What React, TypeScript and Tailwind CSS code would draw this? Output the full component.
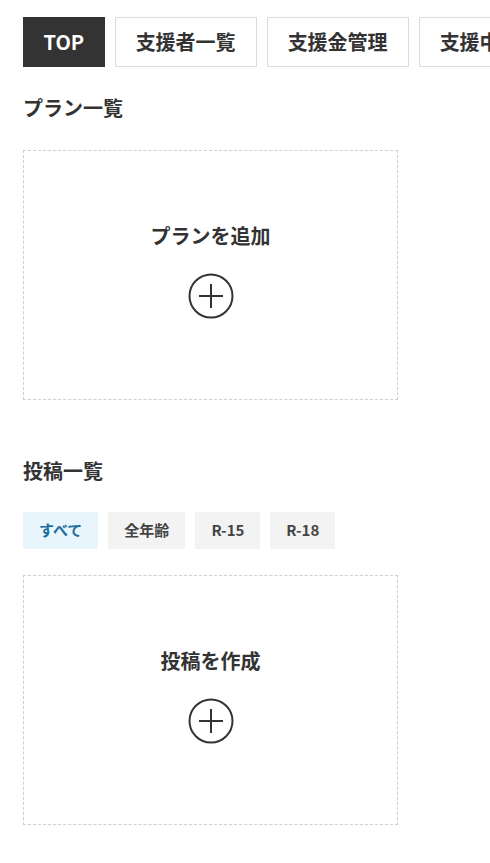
import React from "react";

const font = { fontFamily: '"Noto Sans CJK JP", "Noto Sans", sans-serif' };

function PlusCircle() {
  return (
    <svg width="46" height="46" viewBox="0 0 46 46" fill="none" stroke="#333" strokeWidth="2">
      <circle cx="23" cy="23" r="21.5" />
      <path d="M23 11v24M11 23h24" />
    </svg>
  );
}

function AddBox({ label }: { label: string }) {
  return (
    <div className="flex h-[250px] w-[375px] flex-col items-center justify-center gap-[22px] border border-dashed border-[#cfcfcf] pb-[11px]">
      <span className="text-[20px] font-bold leading-[30px] text-[#333]">{label}</span>
      <PlusCircle />
    </div>
  );
}

export default function App() {
  const tabs = ["支援者一覧", "支援金管理", "支援中のクリエイター"];
  const chips = ["全年齢", "R-15", "R-18"];
  return (
    <main style={font} className="h-[863px] w-[490px] overflow-hidden bg-white pl-[23px] pt-[17px] text-[#333]">
      <nav className="flex gap-[10px] whitespace-nowrap">
        <div className="flex h-[50px] shrink-0 items-center bg-[#333] px-[20.5px] text-[20px] font-bold text-white">
          TOP
        </div>
        {tabs.map((t) => (
          <div
            key={t}
            className="flex h-[50px] shrink-0 items-center border border-[#dcdcdc] px-[20px] text-[20px] font-bold"
          >
            {t}
          </div>
        ))}
      </nav>

      <h2 className="mt-[26px] text-[20px] font-bold leading-[30px]">プラン一覧</h2>
      <div className="mt-[27px]">
        <AddBox label="プランを追加" />
      </div>

      <h2 className="mt-[56px] text-[20px] font-bold leading-[30px]">投稿一覧</h2>
      <div className="mt-[26px] flex gap-[10px]">
        <div className="flex h-[37px] items-center bg-[#e8f5fc] px-4 text-[15px] font-bold text-[#1d6d9e]">
          すべて
        </div>
        {chips.map((c) => (
          <div key={c} className="flex h-[37px] items-center bg-[#f3f3f3] px-4 text-[15px] font-bold text-[#444]">
            {c}
          </div>
        ))}
      </div>
      <div className="mt-[26px]">
        <AddBox label="投稿を作成" />
      </div>
    </main>
  );
}
